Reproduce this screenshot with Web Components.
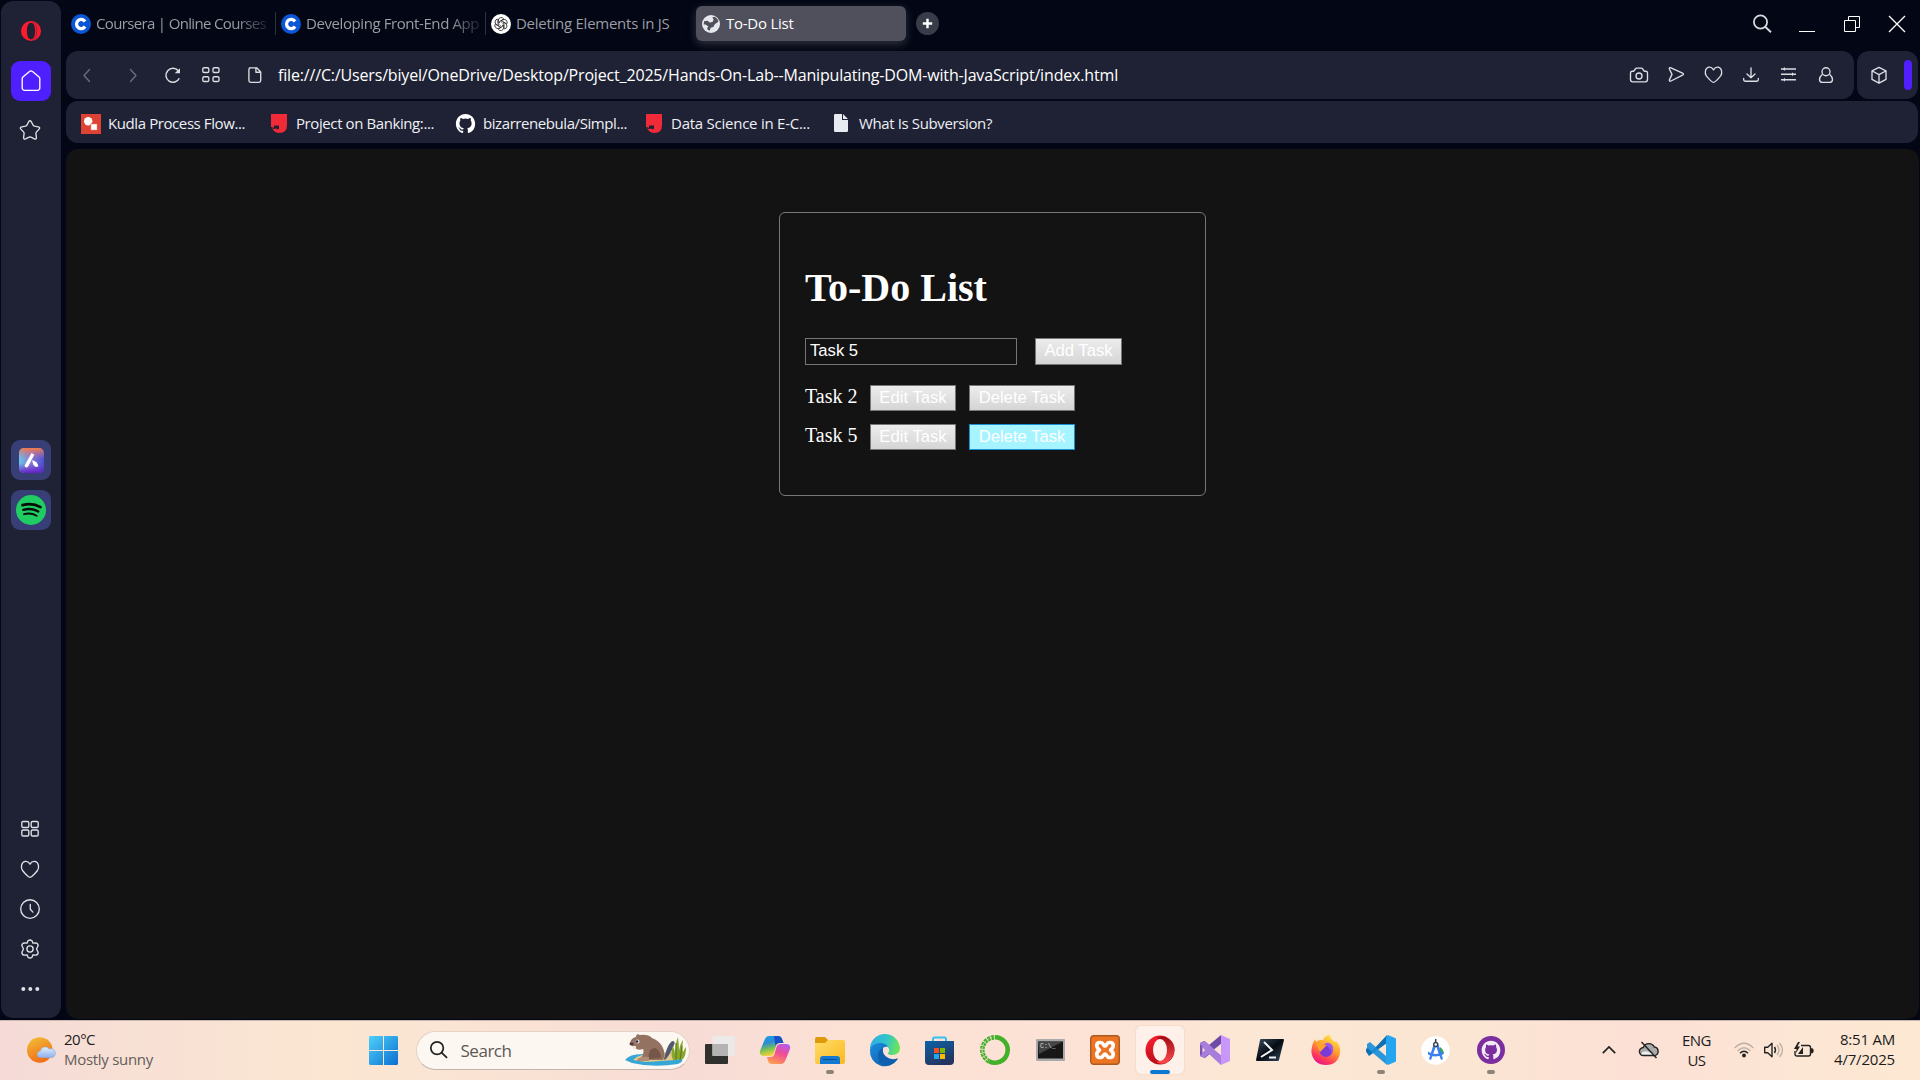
<!DOCTYPE html>
<html lang="en">
<head>
<meta charset="utf-8">
<title>To-Do List</title>
<style>
html,body{margin:0;padding:0;width:1920px;height:1080px;overflow:hidden;background:#030614}
</style>
</head>
<body>
<desktop-screen></desktop-screen>
<script>
const S = 'fill="none" stroke="currentColor" stroke-width="1.35" stroke-linecap="round" stroke-linejoin="round"';
const CAT = 'M12 1C5.9 1 1 6 1 12.2c0 5 3.1 9.1 7.5 10.6.6.1.8-.2.8-.5v-2.1c-3.1.7-3.7-1.4-3.7-1.4-.5-1.3-1.2-1.600-1.200-1.600-1-.7.1-.7.1-.7 1.100.1 1.700 1.200 1.700 1.200 1 1.700 2.600 1.200 3.200.9.100-.700.400-1.200.700-1.500-2.400-.300-5-1.200-5-5.500 0-1.200.400-2.200 1.100-3-.100-.300-.500-1.400.100-2.900 0 0 .900-.300 3 1.100a10.300 10.300 0 0 1 5.500 0c2.100-1.400 3-1.100 3-1.100.6 1.500.2 2.600.1 2.900.7.8 1.100 1.800 1.100 3 0 4.300-2.600 5.200-5 5.500.4.300.7 1 .7 2v3.200c0 .300.200.600.800.500A11.200 11.200 0 0 0 23 12.200C23 6 18.100 1 12 1z';
const ICONS = {
 opera:[20,20,'<path fill="#ff1b2d" fill-rule="evenodd" d="M10 0a10 10 0 1 0 0 20a10 10 0 1 0 0-20zM10 1.700c2.700 0 4.100 3.500 4.100 8.300s-1.400 8.300-4.100 8.300S5.900 14.800 5.900 10 7.300 1.700 10 1.700z"/><path d="M12 1.200c3 1.200 3.800 5 3.800 8.800s-.8 7.600-3.800 8.800" fill="none" stroke="#1f2235" stroke-width=".7" opacity=".6"/>'],
 home:[24,24,`<path ${S} d="M3.200 9.500C3.200 8.700 3.600 8.200 4.200 7.700l6.300-5.200q1.500-1.200 3 0l6.300 5.200c.6.500 1 1 1 1.800V19a2.300 2.300 0 0 1-2.300 2.300h-13A2.300 2.300 0 0 1 3.200 19z"/>`],
 star:[24,24,`<path ${S} d="M10.700 3.700q1.300-1.900 2.600 0l1.800 3.500q.4.700 1.300.9l3.900.7q2.300.5.800 2.300l-2.800 3q-.5.600-.4 1.400l.5 3.900q.1 2.300-2 1.400l-3.400-1.600q-1-.5-2 0l-3.400 1.600q-2.100.9-2-1.400l.5-3.900q.1-.8-.4-1.400l-2.800-3Q1.400 9.300 3.700 8.800l3.900-.7q.9-.2 1.300-.9z"/>`],
 aria:[25,25,'<defs><linearGradient id="a" x1="0" y1=".5" x2="1" y2=".6"><stop stop-color="#62cbea"/><stop offset=".4" stop-color="#8f7fd6"/><stop offset="1" stop-color="#4a50d0"/></linearGradient><linearGradient id="b" x1="0" y1="0" x2="0" y2="1"><stop stop-color="#f37a45"/><stop offset=".45" stop-color="#c06fa0" stop-opacity="0"/><stop offset=".6" stop-color="#6a30c8" stop-opacity="0"/><stop offset="1" stop-color="#6420c8"/></linearGradient></defs><rect width="25" height="25" rx="5" fill="url(#a)"/><rect width="25" height="25" rx="5" fill="url(#b)"/><path d="M12.500 5l2.800 1.700L9 18.800q-2.700 1.800-3.400-1.300z" fill="#fff"/><path d="M13 12.300q5.500 1 6.300 6-3.200 1.800-5-1.500z" fill="#fff"/>'],
 spotify:[30,30,'<circle cx="15" cy="15" r="15" fill="#20cd62"/><g fill="none" stroke="#080b08" stroke-linecap="round"><path d="M6.500 10.100q10-2.700 18 2" stroke-width="2.700"/><path d="M7.300 14.800q8.300-2.200 15 1.700" stroke-width="2.300"/><path d="M8 19.200q7-1.800 12.600 1.500" stroke-width="1.900"/></g>'],
 grid:[24,24,`<g ${S}><rect x="3.800" y="4.500" width="7" height="6" rx="1.300"/><rect x="13.200" y="4.500" width="7" height="6" rx="1.300"/><rect x="3.800" y="13" width="7" height="6" rx="1.300"/><rect x="13.200" y="13" width="7" height="6" rx="1.300"/></g>`],
 grid2:[24,24,`<g ${S}><rect x="3.800" y="4.700" width="6" height="4.800" rx="1.300"/><rect x="14" y="4.700" width="6" height="4.800" rx="1.300"/><rect x="3.800" y="13.700" width="6" height="4.800" rx="1.300"/><rect x="14" y="13.700" width="6" height="4.800" rx="1.300"/></g>`],
 heart:[24,24,`<path ${S} d="M12 20.300q-1.900 0-7.500-6.800C2.500 10.500 3.200 5.300 7.100 4.400c2.400-.4 4 1.200 4.900 2.700.9-1.500 2.500-3.100 4.900-2.700 3.900.9 4.600 6.100 2.600 9.100q-5.600 6.800-7.500 6.800z"/>`],
 clock:[24,24,`<circle ${S} cx="12" cy="12" r="9.300"/><path ${S} d="M12.300 7.500v4.800l2.600 2.800"/>`],
 gear:[24,24,`<path ${S} d="M10 3.800q2-1.600 4 0l1 2.400 2.900-.4q2.300.6 2.200 3L18.500 12l1.600 3.200q.1 2.400-2.200 3l-2.900-.4-1 2.400q-2 1.600-4 0l-1-2.400-2.900.4q-2.300-.6-2.200-3L5.500 12 3.900 8.800q-.1-2.400 2.200-3l2.900.4z"/><circle ${S} cx="12" cy="12" r="3.100"/>`],
 dots:[24,24,'<g fill="currentColor"><circle cx="5.300" cy="12" r="2"/><circle cx="12.300" cy="12" r="2"/><circle cx="19.300" cy="12" r="2"/></g>'],
 coursera:[20,20,'<circle cx="10" cy="10" r="10" fill="#0b56d6"/><path d="M14 7.500A4.600 4.600 0 1 0 14 12.500" fill="none" stroke="#fff" stroke-width="3.300"/>'],
 gpt:[20,20,'<circle cx="10" cy="10" r="10" fill="#fff"/><g fill="none" stroke="#222" stroke-width=".8">'+[0,60,120,180,240,300].map(r=>`<path d="M7.300 9V6.200a3 3 0 0 1 5.400-1.500M8.500 9.200V7.500l4.200-2.500" transform="rotate(${r} 10 10)"/>`).join('')+'</g>'],
 globe:[18,18,'<circle cx="9" cy="9" r="9" fill="#e5e8ec"/><path d="M2 6.300l3.700-.5 1.800 1.700 3-.4 1.200-2.500-1.400-2 2-.8q4 2 4 5l-3.500 2.500-1.500 2.700-2.700.8-.7 2.600q-3-.2-2.600-2.500l1-1.500L3.600 9.400H1.700z" fill="#50505c"/>'],
 plus:[23,23,'<circle cx="11.500" cy="11.500" r="11.500" fill="#383b48"/><path d="M6.800 11.500h9.400M11.500 6.800v9.400" stroke="#fff" stroke-width="2.400"/>'],
 search:[20,20,'<circle cx="8.500" cy="8" r="6.600" fill="none" stroke="currentColor" stroke-width="1.800"/><path d="M13.200 12.800l5.800 5.500" stroke="currentColor" stroke-width="1.900"/>'],
 min:[16,16,'<path d="M0 15.500h16" stroke="#fff" shape-rendering="crispEdges"/>'],
 restore:[16,16,'<path d="M.5 4.500h11v11H.5zM4.500 4.500V.5h11v11h-4" fill="none" stroke="#fff"/>'],
 close:[16,16,'<path d="M0 0L16 16M16 0L0 16" stroke="#fff" stroke-width="1.300"/>'],
 back:[24,24,`<path ${S} d="M14.500 6.500L9 12.500l5.500 6"/>`],
 fwd:[24,24,`<path ${S} d="M9.500 6.500L15 12.500l-5.500 6"/>`],
 reload:[24,24,'<path d="M18.300 15.300A7 7 0 1 1 17.300 7.800" fill="none" stroke="currentColor" stroke-width="1.500"/><path d="M19 5.300v4.900h-5.300z" fill="currentColor"/>'],
 file:[24,24,`<path ${S} d="M5.900 6.500a1.800 1.800 0 0 1 1.800-1.700h6l4 4.200v8.500a1.800 1.800 0 0 1-1.800 1.800H7.700a1.800 1.800 0 0 1-1.800-1.800zM12.900 5v4.200h4.500"/>`],
 camera:[24,24,`<path ${S} d="M3.500 10q0-1.800 1.800-1.800h1.500l1.500-2.200q.5-.9 1.500-.9h4.400q1 0 1.500.9l1.500 2.200h1.500q1.800 0 1.800 1.800v6.500q0 2.300-2.300 2.300H5.800q-2.300 0-2.300-2.300z"/><circle ${S} cx="12" cy="13" r="3"/>`],
 send:[24,24,`<path ${S} d="M5.500 6.200q-.7-2.300 1.500-1.400l11.500 5.400q2 1 0 2L7 18q-2.200.9-1.500-1.400L8 11.400z"/>`],
 download:[24,24,`<path ${S} d="M12 4.800v9.700M8 11l4 3.700 4-3.700M4.700 15.500v1.300q0 1.400 1.400 1.400h11.800q1.400 0 1.400-1.400v-1.300"/>`],
 sliders:[24,24,'<path d="M4 6h15M4 11.200h15M4 16.800h15" stroke="currentColor" stroke-width="1.400"/><path d="M8 4L6 6l2 2zM15 9.200l2 2-2 2zM8 14.800l-2 2 2 2z" fill="currentColor"/>'],
 person:[24,24,`<circle ${S} cx="12" cy="8.700" r="4"/><path ${S} d="M8 11.800q-2.500 2.200-2.500 4.600 0 3 3.200 3h6.600q3.200 0 3.200-3 0-2.400-2.500-4.600"/>`],
 cube:[24,24,`<path ${S} d="M12 4.300l7 3.500v8.600l-7 3.800-7-3.800V7.800zM5.200 8l6.800 3.600L18.800 8M12 11.800v8"/>`],
 kudla:[20,20,'<rect width="20" height="20" fill="#df4234"/><circle cx="7.200" cy="7.200" r="4.200" fill="#fff"/><rect x="9.700" y="9.700" width="6.600" height="6.600" rx=".6" fill="#fff" stroke="#df4234" stroke-width=".8"/>'],
 bank:[16,19,'<path d="M0 0h16v11q0 8-7.500 8-4.700 0-7.300-4.500L0 13z" fill="#f02a36"/><path d="M3 11.500h5v3.300l-1.500.6q-1.500-1.700-2.600-.3L0 14.300V13l3 .8z" fill="#1f2235"/>'],
 github:[24,24,`<path d="${CAT}" fill="#fff"/>`],
 page:[14,18,'<path d="M1.200 0H8v6h6v10.800q0 1.200-1.200 1.200H1.200Q0 18 0 16.800V1.200Q0 0 1.200 0zM9 0l5 5H9z" fill="#e8ebef"/>'],
 weather:[28,26,'<defs><linearGradient id="s" x1=".2" y1="0" x2=".6" y2="1"><stop stop-color="#f0bb38"/><stop offset="1" stop-color="#f26a13"/></linearGradient><linearGradient id="c" x2="0" y2="1"><stop stop-color="#e2effb"/><stop offset="1" stop-color="#8db0ed"/></linearGradient></defs><circle cx="12.800" cy="13" r="12.800" fill="url(#s)"/><path d="M13.500 20.500a3 3 0 0 1-.2-6.300 5 5 0 0 1 9-2.200 4.400 4.400 0 0 1 3.200 8.500z" fill="url(#c)" stroke="#8babe0" stroke-width=".6"/>'],
 win:[29,29,'<defs><linearGradient id="w" x2="1" y2="1"><stop stop-color="#4fd0fb"/><stop offset="1" stop-color="#0a6fd0"/></linearGradient></defs><path d="M1 0h13v14H0V1zM15 0h13l1 1v13H15zM0 15h14v14H1l-1-1zM15 15h14v13l-1 1H15z" fill="url(#w)"/>'],
 beaver:[61,32,'<path d="M0 26q5-7 21-6l35 2q4 5-3 8-25 4-46-1z" fill="#35a6d6"/><path d="M8 26q9-8 27-8l21 1q6 5-5 7l-30 2z" fill="#e3c98a"/><path d="M39 25q3-14 8-18 4 0 2 4-4 10-9 15z" fill="#51596f"/><path d="M48 26q-3-8 0-14 2 5 2 9 0-11 3-18 1 8 1 14 1-7 4-11-1 8 0 12 2-4 3-5 0 9-3 12z" fill="#88a62b"/><path d="M51 26V9M55 26l2-14" stroke="#557b18"/><path d="M15 26q5-8 3-11-5 2-8-1l-4-3q-2-1-1-2 1-5 6-6 0-4 4-2 8-1 12 3 8 3 11 10 3 7 0 12z" fill="#947262"/><path d="M24 25q-2-10 6-11 6 3 6 10" fill="#765648"/><path d="M12 26q2-4 12-3v4H12z" fill="#b18b75"/><circle cx="12.500" cy="7.500" r="2" fill="#eee"/><circle cx="12" cy="7.500" r="1.300" fill="#26233a"/><ellipse cx="6.500" cy="10" rx="2" ry="1.400" fill="#4c3a3e"/><path d="M8 12h3v3H8z" fill="#f3e6de"/>'],
 taskview:[30,28,'<rect y="8" width="23" height="20" rx="1" fill="#30302e"/><rect x="7.500" width="22.500" height="20" rx="1" fill="#eceae8"/><path d="M7.500 8H23v12H7.500z" fill="#b5b4b3"/>'],
 copilot:[30,28,'<defs><linearGradient id="l" x2=".3" y2="1"><stop stop-color="#15a4e7"/><stop offset=".4" stop-color="#2c8bd9"/><stop offset=".7" stop-color="#7bc251"/><stop offset="1" stop-color="#f7d13a"/></linearGradient><linearGradient id="r" x1=".8" x2=".3" y2="1"><stop stop-color="#b55bf0"/><stop offset=".45" stop-color="#ef4d95"/><stop offset="1" stop-color="#ff9c4f"/></linearGradient></defs><path d="M9 0h9q3 0 4 3l1.500 4h-4Q17 7 16 10l-2 7q-1 3-4 3H4q-5 0-4-5L4.500 4Q6 0 9 0z" fill="url(#l)"/><path d="M14 0h4q3 0 4 3l1.500 4h-4q-3 0-4 3z" fill="#1952c4"/><path d="M21 28h-9q-3 0-4-3l-1-4h3.500q3 0 4-3l2-7q1-3 4-3H26q5 0 4 5l-4.500 11q-1.500 4-4.500 4z" fill="url(#r)"/>'],
 folder:[30,27,'<defs><linearGradient id="f" x2="1" y2="1"><stop stop-color="#ffdc6a"/><stop offset="1" stop-color="#fcb91e"/></linearGradient></defs><path d="M0 2q0-2 2-2h8l3 3v4H0z" fill="#dd9b09"/><path d="M0 6h10l3-3h15q2 0 2 2v20q0 2-2 2H2q-2 0-2-2z" fill="url(#f)"/><path d="M5 27v-5q0-3 3-3h14q3 0 3 3v5z" fill="#1479d2"/><path d="M8 22.500h14" stroke="#0c4c95"/>'],
 edge:[30,30,'<defs><linearGradient id="e1" x2="1" y2=".2"><stop stop-color="#31a9ec"/><stop offset=".6" stop-color="#32c6c8"/><stop offset="1" stop-color="#68e35f"/></linearGradient><linearGradient id="e2" x2="1" y2="1"><stop stop-color="#1a8ee0"/><stop offset="1" stop-color="#0b54a0"/></linearGradient></defs><path d="M0 15A15 15 0 0 1 30 13q0 7-8 7-4 0-4-2 2-2 1-4Q17 9 11 9 3 9 0 15z" fill="url(#e1)"/><path d="M0 15Q2 8 10 8q6 0 8 4-6-1-6 5 2 9 11 8 2 0 4-1.500 1.500-.5.500 1A15 15 0 0 1 0 15z" fill="url(#e2)"/><path d="M10 28Q5 17 13 13q-1 5 3 8.500 5 4 11 2-5 8-17 4.500z" fill="#0f5eb0"/>'],
 store:[29,29,'<path d="M8 6V3q0-1.500 1.500-1.500h10Q21 1.500 21 3v3" fill="none" stroke="#35c0f3" stroke-width="2"/><defs><linearGradient id="st" x2=".5" y2="1"><stop stop-color="#0d63a8"/><stop offset="1" stop-color="#23345f"/></linearGradient></defs><path d="M0 5h29v20q0 4-4 4H4q-4 0-4-4z" fill="url(#st)"/><path d="M9 12h5v5H9z" fill="#f25022"/><path d="M15 12h5v5h-5z" fill="#7fba00"/><path d="M9 18h5v5H9z" fill="#22a4ef"/><path d="M15 18h5v5h-5z" fill="#ffb900"/>'],
 conda:[30,30,'<path d="M15 2.300A12.700 12.700 0 1 1 9 26.200" fill="none" stroke="#43b02a" stroke-width="4.600"/><path d="M9 26.200A12.700 12.700 0 0 1 15 2.300" fill="none" stroke="#43b02a" stroke-width="4.600" stroke-dasharray="2.800 .9"/><path d="M8 25.500A12.500 12.500 0 0 1 13 2.500" fill="none" stroke="#fce1d5" stroke-width="1" stroke-dasharray="1.500 2"/>'],
 cmd:[29,22,'<rect width="29" height="22" rx="1" fill="#aaa"/><rect x="2" y="2.500" width="25" height="17" fill="#171717"/><path d="M2 2.500h25L3 15z" fill="#444"/><text x="4" y="9" font-family="Liberation Mono" font-size="6.500" fill="#ddd">C:\\_</text>'],
 xampp:[30,30,'<rect x=".7" y=".7" width="28.600" height="28.600" rx="3" fill="#ec7422" stroke="#ac5a21" stroke-width="1.400"/><path d="M10.500 7.500C6 7 5.500 12 9.500 15C5.500 18 6 23 10.500 22.500C13.500 22.500 13.500 19 15 19C16.500 19 16.500 22.500 19.500 22.500C24 23 24.500 18 20.500 15C24.500 12 24 7 19.500 7.500C16.500 7.500 16.500 11 15 11C13.500 11 13.500 7.500 10.500 7.500z" fill="none" stroke="#fff" stroke-width="3.600" stroke-linejoin="round"/>'],
 opera2:[30,30,'<defs><linearGradient id="o" x2=".3" y2="1"><stop stop-color="#ff1f32"/><stop offset="1" stop-color="#b80d17"/></linearGradient><linearGradient id="o2" y2="1" x2="0"><stop stop-color="#9d0c12"/><stop offset="1" stop-color="#ff4d50"/></linearGradient></defs><ellipse cx="15" cy="15" rx="14.500" ry="14.500" fill="url(#o)"/><path d="M11 3Q18-1 24 4q6 5 5.500 11T24 26q-6 5-13 1 6-1 8-6 2-6 0-12-2-5-8-6z" fill="url(#o2)"/><ellipse cx="15" cy="15" rx="7" ry="11" fill="#fdf1ea"/>'],
 vs:[30,30,'<path d="M0 8l4-2 5 4 12-10v9L5 23l-5-2z" fill="#6e4ba8"/><path d="M0 21V8l5-2 16 14v10L9 19l-5 4z" fill="#a87ddb"/><path d="M0 9l5 6-5 6z" fill="#7a54b5"/><path d="M2.500 12l2.500 3-2.500 3z" fill="#fbe4d5"/><path d="M21 0l9 4v22l-9 4z" fill="#c996fa"/><path d="M21 9v11l-7-5.500z" fill="#fbe4d5"/>'],
 ps:[28,22,'<defs><linearGradient id="ps" x2="1" y2="1"><stop stop-color="#3c5168"/><stop offset=".5" stop-color="#060b12"/><stop offset="1" stop-color="#344b61"/></linearGradient></defs><path d="M5 0h22q1 0 1 1l-5 20q0 1-1 1H1q-1 0-1-1L4 1q0-1 1-1z" fill="url(#ps)"/><path d="M8 3l8 8L5 18M13 18.500h7" fill="none" stroke="#f2f4f7" stroke-width="2"/>'],
 firefox:[30,30,'<defs><linearGradient id="ff" x1=".8" x2=".3" y2="1"><stop stop-color="#fff04a"/><stop offset=".45" stop-color="#ff9b2d"/><stop offset=".8" stop-color="#ff375b"/><stop offset="1" stop-color="#e5148b"/></linearGradient></defs><path d="M19 0q1 5 5 7l1-1q5 5 4 12-2 12-14 12T.5 18Q0 11 4 4l1 3q4-3 7-2 2-5 7-5z" fill="url(#ff)"/><circle cx="15" cy="15.500" r="6.500" fill="#7a3ad5"/><path d="M5 8q4-1 6 1l5 1-4 4-3 3Q6 12 5 8z" fill="#ffa02d"/><path d="M14 8q6-1 8 4 1 7-4 9 5-4 0-8-2-3-4-5z" fill="#9b54ee"/>'],
 code:[30,30,'<path d="M21 0L6 16 2 12.500 0 14v2.500L3 21l18-13z" fill="#0d70b5"/><path d="M1 9l3-2 17 15v8L1 13z" fill="#148dd8" opacity=".9"/><path d="M22 0l8 3.500v23L22 30l-2-2V2z" fill="#25a4ef"/>'],
 studio:[29,29,'<circle cx="14.500" cy="14.500" r="14.300" fill="#fff"/><path d="M19 11q4 3 4 7l-6-1z" fill="#35a853"/><path d="M13 7h4l5 16-2 1-5-14-5 14-2-1zM7 15.500q7 5 15 0v3q-8 4-15 0z" fill="#3c7ff0"/><circle cx="14.700" cy="8.500" r="2" fill="#fff" stroke="#37474f" stroke-width="1.400"/><path d="M14.700 3v3" stroke="#37474f" stroke-width="1.600"/>'],
 ghd:[28,28,`<circle cx="14" cy="14" r="14" fill="#7b2f9e"/><path transform="translate(3.800 3.800) scale(.85)" d="${CAT}" fill="#f3e9f7"/>`],
 caret:[14,8,'<path d="M.8 7.200L7 1l6.200 6.200" fill="none" stroke="#222" stroke-width="1.700"/>'],
 cloud:[20,18,'<path d="M4.500 14.500a4 4 0 0 1-.2-8 6 6 0 0 1 11-.5 4.300 4.300 0 0 1 .3 8.500z" fill="#aaa" stroke="#222" stroke-width="1.400"/><path d="M2 13q2-4 8-2l7 2.500H4z" fill="#eee"/><path d="M2.500 1l15 16" stroke="#222" stroke-width="1.400"/>'],
 wifi:[20,16,'<g fill="none" stroke-width="1.400"><path d="M.7 6q9.300-9.500 18.600 0M3.500 9q6.500-6.500 13 0" stroke="#bdaea4"/><path d="M6 11.200q4-4 8 0" stroke="#222"/></g><circle cx="10" cy="13.500" r="1.900" fill="#222"/>'],
 sound:[20,16,'<path d="M.7 5.200h3L8 1.200v13.600l-4.300-4h-3z" fill="none" stroke="#222" stroke-width="1.400" stroke-linejoin="round"/><path d="M10.500 5q2 3 0 6" fill="none" stroke="#222" stroke-width="1.400"/><path d="M13 3q4 5 0 10M15.500 1q6 7 0 14" fill="none" stroke="#bdaea4" stroke-width="1.300"/>'],
 battery:[20,16,'<path d="M7 3.500h7.500q2 0 2 2v6.500q0 2-2 2H3q-2 0-2-2V9" fill="none" stroke="#222" stroke-width="1.400"/><path d="M17 6.200h1.500q2.500 2.500 0 5H17z" fill="#222"/><path d="M4 0L0 7h2.500L2 11l4-6.500H3.500L6 0zM4 12l5-7v7z" fill="#222"/>']
};

class Base extends HTMLElement {
  connectedCallback(){
    if(this.shadowRoot) return;
    this.attachShadow({mode:'open'}).innerHTML = this.render();
    if(this.ready) this.ready();
  }
  a(n,d=''){ return this.getAttribute(n) ?? d; }
}
const def=(n,c)=>customElements.define(n,c);

/* Named SVG icon with optional size. */
def('x-icon', class extends Base{
  render(){
    const [w,h,b]=ICONS[this.a('name')];
    const W=this.a('w',w), H=this.a('h',h);
    return `<style>:host{display:block;flex:none;width:${W}px;height:${H}px}svg{display:block;overflow:visible}</style><svg width="${W}" height="${H}" viewBox="0 0 ${w} ${h}">${b}</svg>`;
  }
});
/* Single-line label that tracks its letters to fill the width given in w. */
def('x-text', class extends Base{
  render(){
    return `<style>:host{display:block;flex:none;white-space:nowrap;width:${this.a('w')}px;font-size:${this.a('size','15')}px}span{display:inline-block}</style><span><slot></slot></span>`;
  }
  ready(){
    const s=this.shadowRoot.querySelector('span'), n=this.textContent.length;
    s.style.letterSpacing=((+this.a('w')-s.getBoundingClientRect().width)/n)+'px';
  }
});

def('side-bar', class extends Base{
  render(){return `<style>
  :host{display:flex;flex-direction:column;align-items:center;flex:none;box-sizing:border-box;width:60px;height:1017px;margin:1px 5px 0 1px;padding-top:20px;border-radius:12px;background:#1f2235;color:#dfe1e6}
  .b{display:flex;align-items:center;justify-content:center;width:40px;height:40px;border-radius:9px}
  .home{background:#4f1fff;color:#fff;margin:20px 0 17px}
  .app{background:#373f76}
  .mid{display:flex;flex-direction:column;gap:10px;margin:298px 0 286.500px}
  .low{display:flex;flex-direction:column;gap:16px;margin-right:1.500px}
  .star{margin-right:1.500px}
  </style>
  <x-icon name="opera"></x-icon>
  <div class="b home"><x-icon name="home"></x-icon></div>
  <x-icon class="star" name="star"></x-icon>
  <div class="mid"><div class="b app"><x-icon name="aria"></x-icon></div><div class="b app"><x-icon name="spotify"></x-icon></div></div>
  <div class="low">${['grid','heart','clock','gear','dots'].map(n=>`<x-icon name="${n}"></x-icon>`).join('')}</div>`}
});

def('browser-tab', class extends Base{
  render(){const on=this.hasAttribute('active');return `<style>
  :host{display:flex;align-items:center;flex:none;box-sizing:border-box;width:210px;height:35px;padding-left:${on?6:5}px;gap:5px;color:${on?'#fff':'#9b9da4'};${on?'background:#50505c;border-radius:6px;box-shadow:0 3px 9px #50505c99;':''}}
  .t{flex:none;padding-bottom:1px;${this.hasAttribute('fade')?'-webkit-mask:linear-gradient(90deg,#000 calc(100% - 30px),#0003);mask:linear-gradient(90deg,#000 calc(100% - 30px),#0003);':''}}
  .sep{margin-left:auto;width:1px;height:23px;background:#2d303d}
  x-icon{${on?'margin-right:1px':''}}
  </style><x-icon name="${this.a('icon')}"></x-icon><div class="t"><x-text w="${this.a('w')}" size="15"><slot></slot>${this.a('label')}</x-text></div>${this.hasAttribute('sep')?'<div class="sep"></div>':''}`}
});
def('tab-strip', class extends Base{
  render(){return `<style>
  :host{display:flex;height:45px;padding-top:6px;box-sizing:content-box}
  .plus{margin:6px 0 0 10px}
  .win{display:flex;align-items:center;height:36px;margin-left:auto;padding-right:15px}
  .win x-icon:first-child{color:#d6d8dd;margin-right:27px}
  .win x-icon+x-icon{margin-right:29px}.win x-icon:last-child{margin-right:0}
  </style>
  <browser-tab icon="coursera" w="170" label="Coursera | Online Courses" fade sep></browser-tab>
  <browser-tab icon="coursera" w="173" label="Developing Front-End App" fade sep></browser-tab>
  <browser-tab icon="gpt" w="153.500" label="Deleting Elements in JS"></browser-tab>
  <browser-tab icon="globe" w="67.500" label="To-Do List" active></browser-tab>
  <x-icon class="plus" name="plus"></x-icon>
  <div class="win"><x-icon name="search"></x-icon><x-icon name="min"></x-icon><x-icon name="restore"></x-icon><x-icon name="close"></x-icon></div>`}
});

def('address-bar', class extends Base{
  render(){const ic=(n,m)=>`<x-icon name="${n}" style="margin-left:${m}px;${m==8.5||m==22.5?'color:#6b6e7b':''}"></x-icon>`;return `<style>
  :host{display:flex;gap:3px;height:48px;margin-bottom:2px;color:#dcdee3}
  .main,.ext{display:flex;align-items:center;box-sizing:border-box;height:48px;border-radius:12px;background:#1f2235}
  .main{width:1788px;padding-right:16px}
  .url{margin:0 auto 0 11.5px;color:#fff}
  .right{display:flex;gap:13.5px}
  .ext{width:61px;padding:0 6px 0 10px;justify-content:space-between}
  .bar{width:8px;height:30px;border-radius:4px;background:#4f1fff}
  </style>
  <div class="main">${ic('back',8.5)}${ic('fwd',22.5)}${ic('reload',15.5)}${ic('grid2',14.5)}${ic('file',19.5)}
  <x-text class="url" w="840" size="16">file:///C:/Users/biyel/OneDrive/Desktop/Project_2025/Hands-On-Lab--Manipulating-DOM-with-JavaScript/index.html</x-text>
  <div class="right">${['camera','send','heart','download','sliders','person'].map(n=>n=='heart'?'<x-icon name="heart" w="23" h="23" style="margin-right:1px"></x-icon>':`<x-icon name="${n}"></x-icon>`).join('')}</div></div>
  <div class="ext"><x-icon name="cube"></x-icon><div class="bar"></div></div>`}
});

def('bookmark-bar', class extends Base{
  render(){return `<style>
  :host{display:flex;align-items:center;box-sizing:border-box;height:42px;padding-top:3px;border-radius:12px;background:#1f2235;color:#eef0f3;width:1852px}
  x-text{padding-bottom:2px}
  </style>${[['kudla',20,20,15,7,137,'Kudla Process Flow...'],['bank',16,19,26,9,138,'Project on Banking:...'],['github',21,21,21,7,144,'bizarrenebula/Simpl...'],['bank',16,19,19,9,139,'Data Science in E-C...'],['page',14,18,24,11,133,'What Is Subversion?']].map(([n,w,h,m,g,tw,t])=>`<x-icon name="${n}" w="${w}" h="${h}" style="margin:0 ${g}px ${n=='page'?1:0}px ${m}px"></x-icon><x-text w="${tw}">${t}</x-text>`).join('')}`}
});

def('todo-button', class extends Base{
  render(){const hot=this.hasAttribute('hot');return `<style>
  :host{display:block;flex:none;width:${this.a('w')}px;height:${this.a('h','26')}px}
  button{display:flex;justify-content:center;align-items:center;box-sizing:border-box;width:100%;height:100%;margin:0;padding:0 0 ${this.a('pb','1')}px;border:1px solid ${hot?'#1a91d0':'#767676'};border-radius:0;background:${hot?'#a6f4ff':'linear-gradient(#ececec,#d5d5d5)'};color:#fff;font:16.67px "Liberation Sans",Arial,sans-serif;white-space:nowrap}
  </style><button><slot></slot></button>`}
});
def('todo-item', class extends Base{
  render(){return `<style>
  :host{display:flex;align-items:center;height:26px;margin-bottom:13px}
  .n{width:65px;padding-bottom:4px;line-height:22px}
  todo-button+todo-button{margin-left:13px}
  </style><span class="n"><slot></slot></span><todo-button w="86">Edit Task</todo-button><todo-button w="106" ${this.hasAttribute('hot')?'hot':''}>Delete Task</todo-button>`}
});
def('todo-card', class extends Base{
  render(){return `<style>
  :host{display:block;box-sizing:border-box;width:427px;height:284px;margin:63px auto 0 713px;padding:52px 25px 0;border:1px solid #777;border-radius:6px;color:#fff;font:20px "Liberation Serif","Times New Roman",serif}
  h1{margin:0 0 27px;font-size:40px;line-height:46px;font-weight:700}
  .add{display:flex;gap:18px;margin-bottom:20px}
  input{box-sizing:border-box;width:212px;height:27px;margin:0;padding:0 4px 1px;border:1px solid #767676;border-radius:0;background:#131313;color:#fff;outline:0;font:16.67px "Liberation Sans",Arial,sans-serif}
  </style><h1>To-Do List</h1>
  <div class="add"><input value="Task 5"><todo-button w="87" h="27" pb="1">Add Task</todo-button></div>
  <todo-item>Task 2</todo-item><todo-item hot>Task 5</todo-item>`}
});
def('page-view', class extends Base{
  render(){return `<style>:host{display:flow-root;width:1853px;height:870px;margin-top:6px;border-radius:12px;background:#131313}</style><todo-card></todo-card>`}
});

def('task-app', class extends Base{
  render(){const s=this.a('state');return `<style>
  :host{display:grid;place-items:center;position:relative;flex:none;width:48px;height:48px;border-radius:5px;${s=='active'?'background:#fff4edcc;box-shadow:0 0 1px #b9a59a;':''}}
  i{position:absolute;bottom:0;left:50%;transform:translateX(-50%);height:4px;border-radius:2px;width:${s=='active'?20:8}px;background:${s=='active'?'#0b78d4':'#8f8279'}}
  </style><x-icon name="${this.a('icon')}"></x-icon>${s?'<i></i>':''}`}
});
def('task-bar', class extends Base{
  render(){return `<style>
  :host{display:flex;align-items:center;box-sizing:border-box;width:1920px;height:60px;padding-bottom:1px;border-top:1px solid #c9b8b1;background:linear-gradient(90deg,#f5dad7,#f7dfd5 100px,#fbe6d2 330px,#fae3d3 480px,#f7dcd6 690px,#fce1d5 850px,#fce3d6 1100px,#fce7d4 1260px,#fbe6d3 1450px,#fce0d5 1630px,#fce6d4 1800px,#fde8d3);color:#1c1b1b}
  .wx{display:flex;align-items:center;width:342px;padding-left:27px;gap:9px}
  .wx div,.stack{line-height:20px;padding-bottom:2px}.wx .g{color:#655c59}
  .wx x-icon{margin-bottom:1px}
  .pill{display:flex;align-items:center;box-sizing:border-box;width:274px;height:39px;margin:0 6px 0 17.5px;padding:0 3px 0 12px;border:1px solid #e4d2c6;border-bottom-color:#c5b4ab;border-radius:20px;background:#fdf7f2}
  .pill x-text{margin:0 auto 0 13px;color:#5c5856}
  .apps{display:flex;gap:7.1px}
  .tray{display:flex;align-items:center;margin-left:auto;padding-right:25px}
  .stack{display:flex;flex-direction:column;align-items:center}
  </style>
  <div class="wx"><x-icon name="weather"></x-icon><div><x-text w="31">20°C</x-text><x-text class="g" w="89">Mostly sunny</x-text></div></div>
  <x-icon name="win"></x-icon>
  <div class="pill"><x-icon name="search" w="19" h="20" style="color:#222"></x-icon><x-text w="51" size="17">Search</x-text><x-icon name="beaver"></x-icon></div>
  <div class="apps">${[['taskview'],['copilot'],['folder','open'],['edge'],['store'],['conda'],['cmd'],['xampp'],['opera2','active'],['vs'],['ps'],['firefox'],['code','open'],['studio'],['ghd','open']].map(([n,s=''])=>`<task-app icon="${n}" state="${s}"></task-app>`).join('')}</div>
  <div class="tray"><x-icon name="caret" style="margin-right:23px"></x-icon><x-icon name="cloud" style="margin-right:23px"></x-icon>
  <div class="stack" style="margin-right:23px;padding-bottom:0"><x-text w="29">ENG</x-text><x-text w="18">US</x-text></div>
  <x-icon name="wifi" style="margin-right:10px"></x-icon><x-icon name="sound" style="margin-right:10px"></x-icon><x-icon name="battery" style="margin-right:20px"></x-icon>
  <div class="stack" style="align-items:flex-end"><x-text w="55">8:51 AM</x-text><x-text w="61">4/7/2025</x-text></div></div>`}
});

def('desktop-screen', class extends Base{
  render(){return `<style>
  :host{display:flex;flex-direction:column;width:1920px;height:1080px;background:#030614;font-family:"Open Sans","Noto Sans",sans-serif}
  .win{display:flex;height:1020px}
  .col{flex:1;min-width:0}
  </style><div class="win"><side-bar></side-bar><div class="col"><tab-strip></tab-strip><address-bar></address-bar><bookmark-bar></bookmark-bar><page-view></page-view></div></div><task-bar></task-bar>`}
});
</script>
</body>
</html>
